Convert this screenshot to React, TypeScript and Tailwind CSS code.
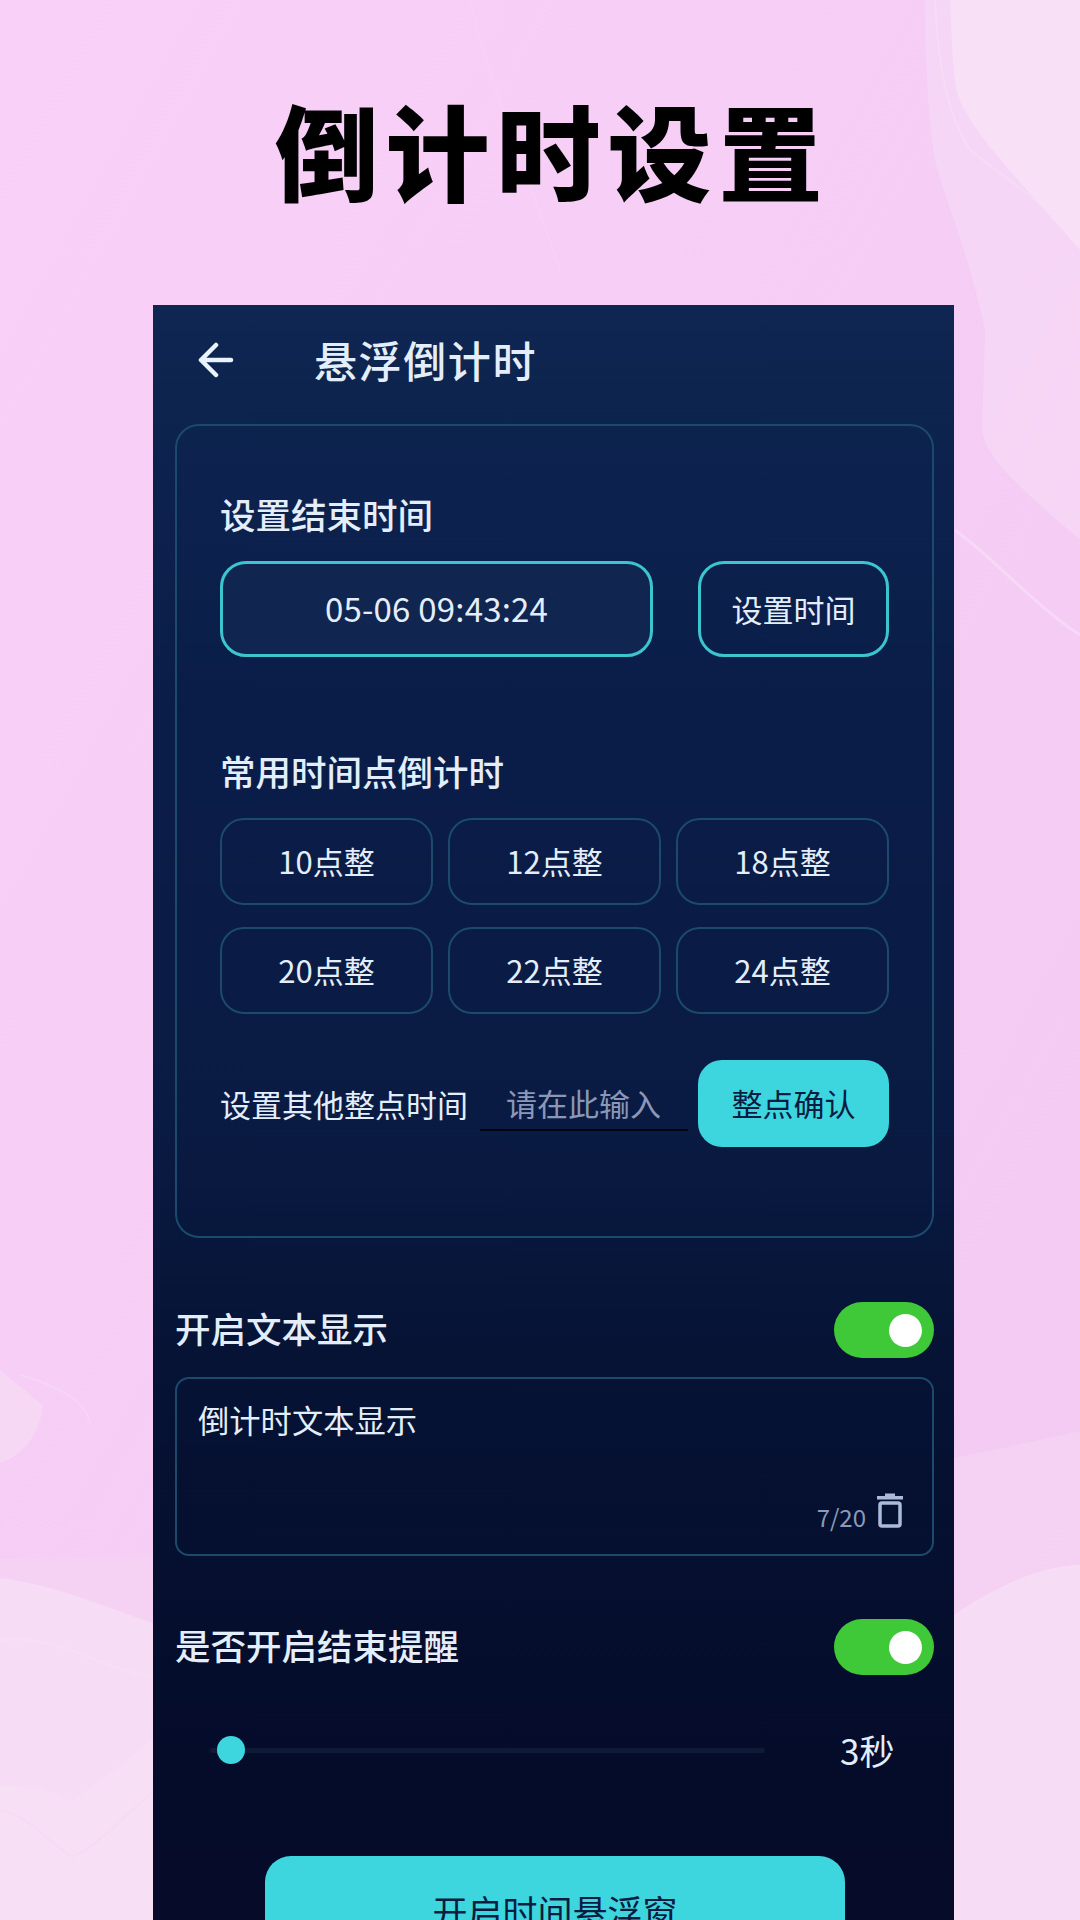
/**
 * Pantalla promocional: ajustes de la cuenta atras flotante dentro de un marco de movil.
 */
import type { ReactNode } from 'react';

const hours = ['10点整', '12点整', '18点整', '20点整', '22点整', '24点整'];

/** Fondo de marmol rosa, solo decoracion detras del contenido. */
function MarbleBackground() {
  return (
    <svg className="absolute inset-0 w-full h-full" viewBox="0 0 1080 1920" fill="none">
      <path d="M925 0 C925 60 928 120 935 160 C945 200 965 240 985 330 L982 430 C985 455 1010 480 1080 540 L1080 0 Z" fill="#f6d8f5" opacity="0.75" />
      <path d="M950 0 C952 40 952 70 958 95 C970 130 1010 170 1080 250 L1080 0 Z" fill="#f8e0f7" />
      <path d="M935 0 C938 60 945 110 970 150 C1000 175 1050 205 1080 245" stroke="#f8e0f7" strokeWidth="2" opacity="0.6" />
      <path d="M955 530 C990 555 1040 610 1080 635" stroke="#f7d8f6" strokeWidth="3" />
      <path d="M0 1558 C200 1555 500 1560 1080 1431 L1080 1920 L0 1920 Z" fill="#f5d3f4" opacity="0.7" />
      <path d="M0 1578 C60 1585 110 1610 160 1625 L954 1615 C990 1590 1040 1565 1080 1565 L1080 1920 L0 1920 Z" fill="#f6ddf5" />
      <path d="M0 1640 C60 1635 90 1665 150 1676 L954 1660" stroke="#f8e2f7" strokeWidth="2" opacity="0.6" />
      <path d="M0 1785 C40 1785 60 1795 72 1803 C90 1785 120 1770 160 1730 L160 1920 L0 1920 Z" fill="#f7e0f6" />
      <path d="M0 1810 C30 1815 50 1845 72 1857 C100 1845 130 1810 160 1785" stroke="#f6dbf4" strokeWidth="2" />
      <path d="M0 1370 L43 1405 C40 1435 20 1458 0 1463 Z" fill="#f6d8f5" />
      <path d="M20 1375 C55 1385 88 1400 90 1425" stroke="#f6d6f5" strokeWidth="2" />
      <path d="M470 0 C490 90 530 180 560 270" stroke="#f7d2f7" strokeWidth="2" />
    </svg>
  );
}

function Toggle() {
  return (
    <div className="flex items-center justify-end w-[100px] h-[56px] rounded-full bg-[#3fc837] pr-[12px]">
      <div className="w-[33px] h-[33px] rounded-full bg-white" />
    </div>
  );
}

function SectionLabel({ children }: { children: ReactNode }) {
  return <div className="h-[44px] text-[35.5px] leading-[40px] font-medium text-[#e3eefa]">{children}</div>;
}

export default function App() {
  return (
    <div
      className="relative w-[1080px] h-[1920px] overflow-hidden bg-gradient-to-br from-[#f8d0f8] to-[#f3caf2]"
      style={{ fontFamily: '"Noto Sans CJK SC", "Noto Sans", sans-serif' }}
    >
      <MarbleBackground />
      <div className="relative flex flex-col h-full">
        {/* Titulo grande */}
        <div className="h-[305px] shrink-0 flex justify-center pt-[84px] pl-[24px]">
          <h1 className="text-[104px] leading-[130px] font-black tracking-[7px] text-black">倒计时设置</h1>
        </div>

        {/* Marco del movil */}
        <div className="ml-[153px] w-[801px] flex-1 overflow-hidden bg-[linear-gradient(180deg,#0e2651_0%,#0a1d49_25%,#0a1b43_50%,#061335_65%,#050d2c_85%,#050b28_100%)]">
          <div className="h-[119px] flex items-center pb-[10px]">
            <svg className="ml-[45px] w-[36px] h-[36px]" viewBox="0 0 36 36" fill="none" stroke="#e8f3fd" strokeWidth="4.5" strokeLinecap="round" strokeLinejoin="round">
              <path d="M3 18 H33 M18 3 L3 18 L18 33" />
            </svg>
            <span className="ml-[80px] mb-[2px] text-[43px] leading-[56px] font-medium text-[#e3eefa] tracking-[1.6px]">悬浮倒计时</span>
          </div>

          <div className="ml-[22px] w-[759px] h-[814px] rounded-[24px] border-2 border-[#1b4a6c] pt-[68px] px-[43px]">
            <SectionLabel>设置结束时间</SectionLabel>
            <div className="mt-[23px] flex gap-[45px]">
              <div className="w-[433px] h-[96px] rounded-[26px] border-[3px] border-[#3cc5cf] bg-[#10254f] flex items-center justify-center text-[33px] tracking-[0.2px] text-[#e3eefa]">05-06 09:43:24</div>
              <div className="w-[191px] h-[96px] rounded-[26px] border-[3px] border-[#3cc5cf] flex items-center justify-center text-[31px] text-[#e3eefa]">设置时间</div>
            </div>

            <div className="mt-[94px]">
              <SectionLabel>常用时间点倒计时</SectionLabel>
            </div>
            <div className="mt-[23px] grid grid-cols-3 gap-x-[15px] gap-y-[22px]">
              {hours.map(h => (
                <div key={h} className="h-[87px] rounded-[24px] border-2 border-[#1b4a6c] flex items-center justify-center text-[31px] text-[#e3eefa]">{h}</div>
              ))}
            </div>

            <div className="mt-[46px] flex items-center">
              <span className="w-[260px] mt-[2px] text-[31px] text-[#e3eefa]">设置其他整点时间</span>
              <div className="w-[208px] h-[50px] self-start mt-[21px] border-b-2 border-[#02050f] pl-[26px] text-[31px] leading-[44px] text-[#8a97b8]">请在此输入</div>
              <div className="ml-[10px] w-[191px] h-[87px] rounded-[24px] bg-[#3dd6df] flex items-center justify-center text-[31px] text-[#0a1c3f]">整点确认</div>
            </div>
          </div>

          <div className="mt-[64px] ml-[22px] w-[759px] flex items-center justify-between">
            <SectionLabel>开启文本显示</SectionLabel>
            <Toggle />
          </div>

          <div className="relative mt-[19px] ml-[22px] w-[759px] h-[179px] rounded-[14px] border-2 border-[#1b4a6c] pt-[19px] px-[21px]">
            <div className="text-[31.3px] leading-[44px] text-[#e3eefa]">倒计时文本显示</div>
            <div className="absolute right-[28px] bottom-[26px] flex items-end gap-[10px]">
              <span className="text-[24px] leading-[30px] mb-[-4px] text-[#8b9ab8]">7/20</span>
              <svg className="w-[28px] h-[36px]" viewBox="0 0 28 36" fill="none">
                <path d="M9 1.5 H19 V4 H27 V7.5 H1 V4 H9 Z" fill="#a9bbd8" />
                <rect x="4" y="11" width="20" height="23" rx="2" stroke="#a9bbd8" strokeWidth="3.5" />
              </svg>
            </div>
          </div>

          <div className="mt-[63px] ml-[22px] w-[759px] flex items-center justify-between">
            <SectionLabel>是否开启结束提醒</SectionLabel>
            <Toggle />
          </div>

          <div className="mt-[53px] h-[44px] flex items-center">
            <div className="relative ml-[57px] w-[555px] h-[5px] rounded-full bg-[#0d1b36]">
              <div className="absolute left-[7px] top-[-12px] w-[28px] h-[28px] rounded-full bg-[#3dd6df]" />
            </div>
            <span className="ml-[75px] text-[35px] leading-[44px] text-[#e3eefa]">3秒</span>
          </div>

          <div className="mt-[84px] ml-[112px] w-[580px] h-[110px] rounded-[26px] bg-[#3dd6df] flex items-center justify-center text-[35px] text-[#0a1c3f]">开启时间悬浮窗</div>
        </div>
      </div>
    </div>
  );
}
